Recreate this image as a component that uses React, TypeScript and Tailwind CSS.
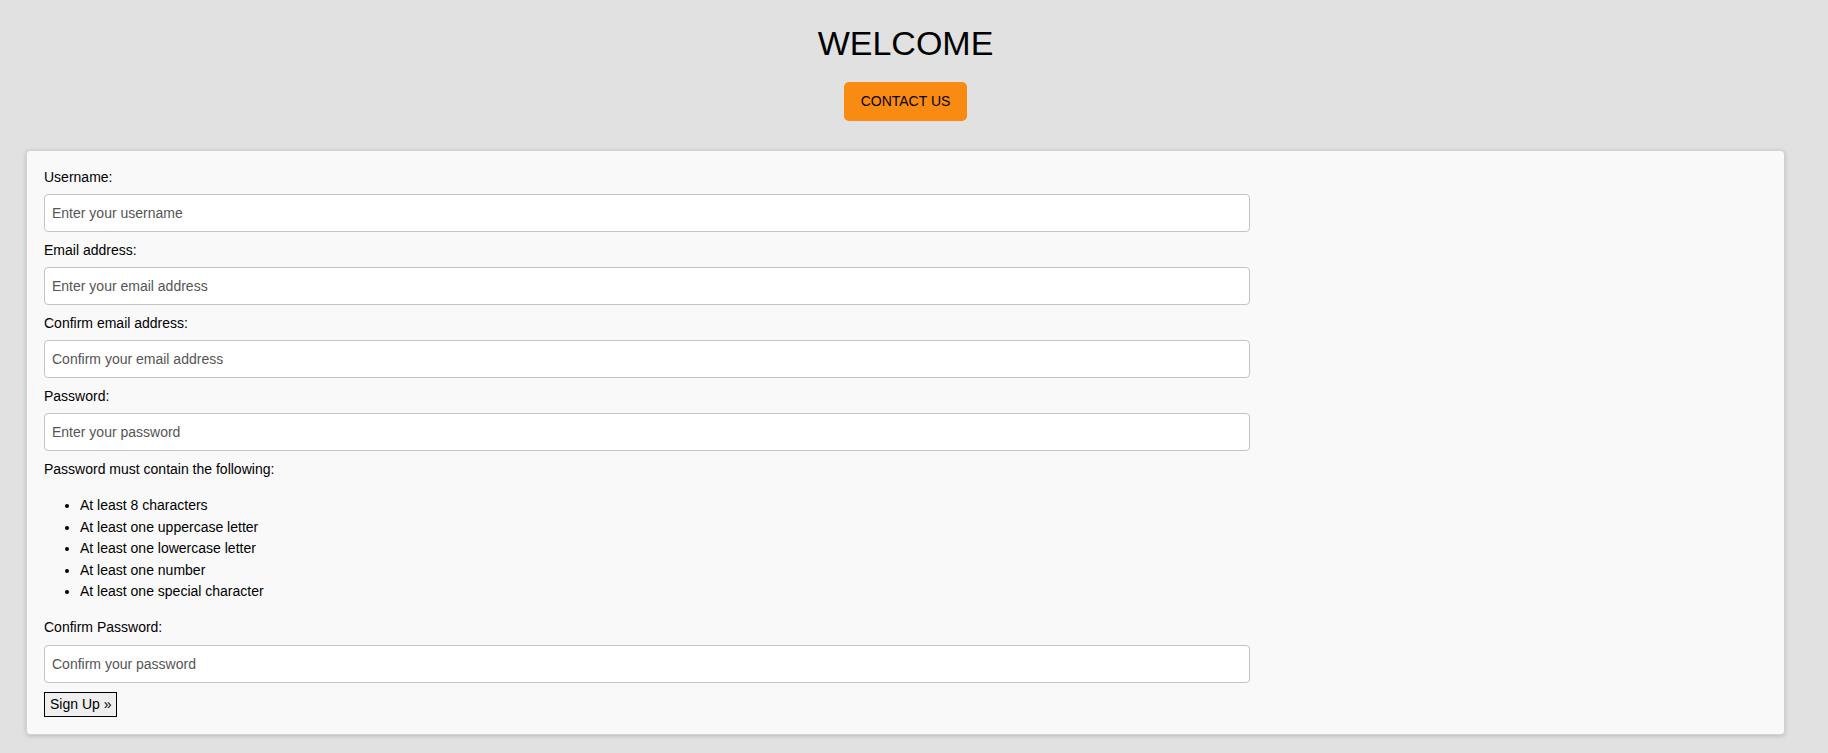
const fields = [
  { label: 'Username:', placeholder: 'Enter your username', type: 'text' },
  { label: 'Email address:', placeholder: 'Enter your email address', type: 'email' },
  { label: 'Confirm email address:', placeholder: 'Confirm your email address', type: 'email' },
  { label: 'Password:', placeholder: 'Enter your password', type: 'password' },
]

const rules = [
  'At least 8 characters',
  'At least one uppercase letter',
  'At least one lowercase letter',
  'At least one number',
  'At least one special character',
]

const inputCls =
  'block w-[70%] h-[38px] px-[7px] bg-white border border-[#c4c4c4] rounded-[4px] text-[14px] text-black placeholder:text-[#555555] outline-none'

const Field = ({ label, placeholder, type }: { label: string; placeholder: string; type: string }) => {
  return (
    <div className="mb-[9px]">
      <label className="block text-[14px] leading-[19px] mb-[7px] text-black">{label}</label>
      <input type={type} placeholder={placeholder} className={inputCls} />
    </div>
  )
}

const App = () => {
  return (
    <div className="min-h-[753px] bg-[#e1e1e1] font-['Liberation_Sans',Arial,sans-serif] text-black">
      <div className="w-[1811px]">
        <div className="pt-[23px] flex flex-col items-center">
          <h1 className="text-[34px] leading-[40px] font-normal">WELCOME</h1>
          <button className="mt-[19px] w-[123px] h-[39px] bg-[#f98b13] rounded-[5px] text-[14px] text-black">
            CONTACT US
          </button>
        </div>

        <div className="mx-[26px] mt-[29px] bg-[#f9f9f9] border border-[#d2d2d2] rounded-[4px] shadow-[0_1px_4px_rgba(0,0,0,0.18)] px-[17px] pt-[17px] pb-[17px]">
          {fields.map((f) => (
            <Field key={f.label} {...f} />
          ))}

          <p className="mt-[2px] text-[14px] leading-[19px]">Password must contain the following:</p>
          <ul className="list-disc pl-[36px] mt-[16px] mb-[15px] text-[14px] leading-[21.5px]">
            {rules.map((r) => (
              <li key={r}>{r}</li>
            ))}
          </ul>

          <label className="block text-[14px] leading-[19px] mb-[8px]">Confirm Password:</label>
          <input type="password" placeholder="Confirm your password" className={inputCls} />
          <button className="mt-[9px] h-[25px] px-[5px] bg-[#efefef] border border-black text-[14px] leading-[21px] text-black">
            Sign Up »
          </button>
        </div>
      </div>
    </div>
  )
}

export default App
